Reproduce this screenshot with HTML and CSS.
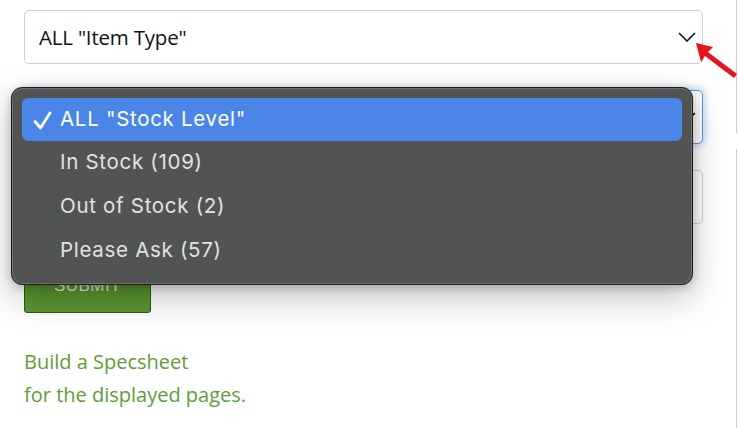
FILE: index.html
```html
<!DOCTYPE html>
<html>
<head>
<meta charset="utf-8">
<link rel="stylesheet" href="styles.css">
</head>
<body>
<div class="page">
  <main class="form">
    <div class="select">
      <span class="select-text">ALL "Item Type"</span>
      <svg class="chev" width="18" height="10" viewBox="0 0 18 10"><polyline points="1,1 9,9 17,1" fill="none" stroke="#111" stroke-width="1.6"/></svg>
    </div>
    <div class="select focused">
      <span class="select-text">ALL "Stock Level"</span>
      <svg class="chev" width="18" height="10" viewBox="0 0 18 10"><polyline points="1,1 9,9 17,1" fill="none" stroke="#111" stroke-width="1.6"/></svg>
    </div>
    <div class="input"></div>
    <button class="submit">SUBMIT</button>
    <p class="spec">Build a Specsheet<br>for the displayed pages.</p>
  </main>
  <aside class="side">
    <div class="side-top"></div>
    <div class="side-bottom"></div>
  </aside>

  <div class="menu">
    <div class="opt selected">
      <svg class="check" width="19" height="19" viewBox="0 0 19 19"><polyline points="2,10.5 7.5,17 17,2" fill="none" stroke="#fff" stroke-width="2.8" stroke-linecap="round" stroke-linejoin="round"/></svg>
      <span>ALL "Stock Level"</span>
    </div>
    <div class="opt"><span>In Stock (109)</span></div>
    <div class="opt"><span>Out of Stock (2)</span></div>
    <div class="opt"><span>Please Ask (57)</span></div>
  </div>

  <svg class="arrow" width="44" height="40" viewBox="0 0 44 40">
    <polygon points="0,0 17,4 12,9 41,31 38,35 9,13 5,19" fill="#e8141b"/>
  </svg>
</div>
</body>
</html>
```
FILE: styles.css
```css
* { box-sizing: border-box; }
html, body { margin: 0; padding: 0; background: #fff; }
body { width: 738px; height: 428px; overflow: hidden; }
.page { position: relative; display: flex; width: 738px; height: 428px; }
.form {
  width: 736px;
  padding: 10px 33px 0 24px;
  display: flex;
  flex-direction: column;
  font-family: "Source Sans Pro", "Open Sans", "Noto Sans", sans-serif;
}
.select, .input {
  height: 54px;
  border: 1px solid #cfcfcf;
  border-radius: 5px;
  background: #fff;
  display: flex;
  align-items: center;
  justify-content: space-between;
  padding: 0 6px 0 14px;
  margin-bottom: 26px;
  flex-shrink: 0;
}
.select-text { font-size: 20.5px; color: #111; letter-spacing: -0.2px; }
.focused { border-color: #5b9be6; box-shadow: 0 0 6px 2px rgba(91,155,230,0.35); }
.input { margin-bottom: 34px; }
.submit {
  align-self: flex-start;
  width: 127px;
  height: 55px;
  background: #5a962f;
  border: 1px solid #2f5a1a;
  border-radius: 3px;
  color: #e6eedf;
  font-family: "Liberation Sans", Arial, sans-serif;
  font-size: 17px;
  letter-spacing: 0.5px;
}
.spec {
  margin: 32px 0 0 0;
  color: #5e9e34;
  font-size: 20px;
  line-height: 33px;
}
.side { width: 2px; display: flex; flex-direction: column; }
.side-top { height: 133px; border-left: 1px solid #d0d0d0; }
.side-bottom { margin-top: 16px; flex: 1; border-left: 1px solid #d0d0d0; }

.menu {
  position: absolute;
  left: 11px;
  top: 87px;
  width: 682px;
  height: 198px;
  background: #525453;
  border: 1px solid #1f1f1f;
  border-radius: 11px;
  box-shadow: inset 0 0 0 1px #6d6e6d, 0 12px 34px rgba(0,0,0,0.26), 0 2px 8px rgba(0,0,0,0.2);
  padding: 10px 10px 0 10px;
  font-family: "Inter", "Noto Sans", sans-serif;
}
.opt {
  height: 44px;
  display: flex;
  align-items: center;
  padding-left: 38px;
  padding-bottom: 3px;
  position: relative;
  font-size: 20.5px;
  letter-spacing: 0.7px;
  color: #e2e2e2;
  border-radius: 6px;
}
.opt.selected { background: #4986e7; color: #fff; height: 43px; padding-bottom: 2px; }
.check { position: absolute; left: 11px; top: 13px; }

.arrow { position: absolute; left: 696px; top: 43px; }
```
